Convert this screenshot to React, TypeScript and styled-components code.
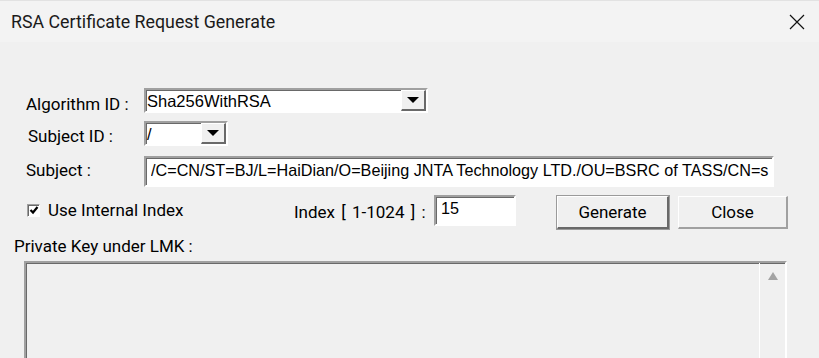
import React, { useState } from 'react';
import styled, { createGlobalStyle, css } from 'styled-components';

const GlobalStyle = createGlobalStyle`
  html, body { margin: 0; padding: 0; }
  body {
    background: #f0f0f0;
    font-family: Roboto, "Noto Sans", sans-serif;
    color: #000;
    overflow: hidden;
  }
`;

const sunken = css`
  border-style: solid;
  border-width: 2px;
  border-color: #a0a0a0 #ffffff #ffffff #a0a0a0;
  box-shadow: inset 1px 1px 0 #696969;
  background: #fff;
  box-sizing: border-box;
`;

const fieldFont = css`
  font-family: "Liberation Sans", Arial, sans-serif;
  font-size: 16.2px;
  color: #000;
`;

const Window = styled.div`
  width: 819px;
  height: 358px;
  overflow: hidden;
  background: #f0f0f0;
  display: flex;
  flex-direction: column;
`;

const TitleBar = styled.div`
  height: 42px;
  flex-shrink: 0;
  display: flex;
  align-items: center;
  justify-content: space-between;
  background: #f3f3f3;
  border-top: 1px solid #e2e2e2;
  box-sizing: border-box;
  padding: 0 14px 0 11px;
`;

const Title = styled.span`
  font-size: 17.8px;
  color: #1a1a1a;
  margin-top: -1px;
`;

const CloseIcon = styled.svg`
  width: 16px;
  height: 16px;
  margin-top: 1px;
`;

const Body = styled.div`
  display: flex;
  flex-direction: column;
  padding: 46px 0 0 0;
`;

const FieldGrid = styled.div`
  display: grid;
  grid-template-columns: 144px auto;
  row-gap: 8px;
  align-items: center;
`;

const Label = styled.span<{ indent: number; shift: number }>`
  padding-left: ${({ indent }) => indent}px;
  position: relative;
  top: ${({ shift }) => shift}px;
  font-size: 17px;
  white-space: nowrap;
`;

const Combo = styled.div<{ width: number }>`
  ${sunken};
  width: ${({ width }) => width}px;
  height: 25px;
  display: flex;
  align-items: stretch;
`;

const ComboText = styled.span`
  ${fieldFont};
  font-size: 16.5px;
  flex: 1;
  line-height: 23px;
  padding-left: 1px;
`;

const DropButton = styled.div`
  width: 25px;
  background: #f0f0f0;
  border-style: solid;
  border-width: 1px 2px 2px 1px;
  border-color: #ffffff #696969 #696969 #ffffff;
  box-sizing: border-box;
  display: flex;
  align-items: center;
  justify-content: center;
`;

const Arrow = styled.div`
  width: 0;
  height: 0;
  border-left: 6px solid transparent;
  border-right: 6px solid transparent;
  border-top: 6px solid #000;
`;

const SubjectRow = styled.div`
  grid-column: 1 / span 2;
  display: grid;
  grid-template-columns: 144px auto;
  align-items: center;
  margin-top: 2px;
`;

const SubjectInput = styled.input`
  ${sunken};
  ${fieldFont};
  width: 630px;
  height: 31px;
  padding: 0 0 2px 5px;
  outline: none;
`;

const ActionRow = styled.div`
  display: flex;
  align-items: center;
  margin-top: 9px;
  height: 33px;
`;

const CheckLabel = styled.label`
  display: flex;
  align-items: center;
  gap: 8px;
  padding-left: 27px;
  width: 267px;
  font-size: 17px;
  margin-top: -5px;
  cursor: default;
`;

const CheckBox = styled.span`
  ${sunken};
  width: 13px;
  height: 13px;
  border-width: 1px;
  display: flex;
  align-items: center;
  justify-content: center;
`;

const IndexLabel = styled.span`
  font-size: 17px;
  word-spacing: 2px;
  width: 140px;
  margin-top: -2px;
`;

const IndexInput = styled.input`
  ${sunken};
  ${fieldFont};
  width: 82px;
  height: 31px;
  padding: 0 0 4px 5px;
  outline: none;
  margin-top: -4px;
`;

const Button = styled.button<{ primary?: boolean }>`
  height: 33px;
  width: ${({ primary }) => (primary ? 112 : 110)}px;
  margin-left: ${({ primary }) => (primary ? 41 : 9)}px;
  box-sizing: border-box;
  font-family: Roboto, sans-serif;
  font-size: 17px;
  color: #000;
  border-style: solid;
  border-width: 1px 2px 2px 1px;
  border-color: ${({ primary }) =>
    primary ? '#ffffff #696969 #696969 #ffffff' : '#ffffff #a0a0a0 #a0a0a0 #ffffff'};
  outline: ${({ primary }) => (primary ? '1px solid #9a9a9a' : 'none')};
  background: #f0f0f0;
  padding: 0;
`;

const SectionLabel = styled.div`
  font-size: 17px;
  padding-left: 14px;
  margin-top: 7px;
`;

const KeyArea = styled.div`
  ${sunken};
  margin: 5px 0 0 24px;
  width: 763px;
  height: 120px;
  background: #f0f0f0;
  display: flex;
  justify-content: flex-end;
`;

const ScrollTrack = styled.div`
  width: 25px;
  border-left: 1px solid #ffffff;
  display: flex;
  justify-content: center;
  padding-top: 9px;
`;

const ScrollArrow = styled.div`
  width: 0;
  height: 0;
  border-left: 5px solid transparent;
  border-right: 5px solid transparent;
  border-bottom: 8px solid #a3a3a3;
`;

export default function App() {
  const [subject, setSubject] = useState(
    '/C=CN/ST=BJ/L=HaiDian/O=Beijing JNTA Technology LTD./OU=BSRC of TASS/CN=s'
  );
  const [index, setIndex] = useState('15');

  return (
    <>
      <GlobalStyle />
      <Window>
        <TitleBar>
          <Title>RSA Certificate Request Generate</Title>
          <CloseIcon viewBox="0 0 16 16">
            <path d="M1 1 L15 15 M15 1 L1 15" stroke="#111" strokeWidth="1.2" />
          </CloseIcon>
        </TitleBar>
        <Body>
          <FieldGrid>
            <Label indent={26} shift={3}>Algorithm ID :</Label>
            <Combo width={284}>
              <ComboText>Sha256WithRSA</ComboText>
              <DropButton>
                <Arrow />
              </DropButton>
            </Combo>
            <Label indent={28} shift={2}>Subject ID :</Label>
            <Combo width={84}>
              <ComboText>/</ComboText>
              <DropButton>
                <Arrow />
              </DropButton>
            </Combo>
            <SubjectRow>
              <Label indent={26} shift={-2}>Subject :</Label>
              <SubjectInput value={subject} onChange={e => setSubject(e.target.value)} />
            </SubjectRow>
          </FieldGrid>
          <ActionRow>
            <CheckLabel>
              <CheckBox>
                <svg width="10" height="10" viewBox="0 0 10 10">
                  <path d="M1.5 5 L4 7.5 L8.5 2" stroke="#000" strokeWidth="2.2" fill="none" />
                </svg>
              </CheckBox>
              Use Internal Index
            </CheckLabel>
            <IndexLabel>Index [ 1-1024 ] :</IndexLabel>
            <IndexInput value={index} onChange={e => setIndex(e.target.value)} />
            <Button primary>Generate</Button>
            <Button>Close</Button>
          </ActionRow>
          <SectionLabel>Private Key under LMK :</SectionLabel>
          <KeyArea>
            <ScrollTrack>
              <ScrollArrow />
            </ScrollTrack>
          </KeyArea>
        </Body>
      </Window>
    </>
  );
}
